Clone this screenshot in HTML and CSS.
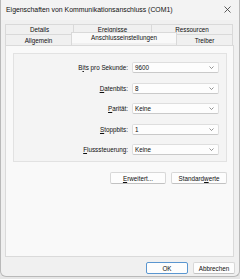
FILE: index.html
```html
<!DOCTYPE html>
<html lang="de">
<head>
    <meta charset="UTF-8">
    <title>Eigenschaften von Kommunikationsanschluss (COM1)</title>
    <link rel="stylesheet" href="styles.css">
</head>
<body>
    <div class="window">
        <div class="titlebar">
            <span class="title">Eigenschaften von Kommunikationsanschluss (COM1)</span>
            <svg class="close" width="7" height="7" viewBox="0 0 7 7">
                <path d="M0.5 0.5 L6.5 6.5 M6.5 0.5 L0.5 6.5" stroke="#333" stroke-width="0.8" fill="none"/>
            </svg>
        </div>

        <div class="tabs">
            <div class="tab-row back">
                <div class="tab tab-details">Details</div>
                <div class="tab tab-events">Ereignisse</div>
                <div class="tab tab-res">Ressourcen</div>
            </div>
            <div class="tab-row front">
                <div class="tab tab-general">Allgemein</div>
                <div class="tab tab-port active">Anschlusseinstellungen</div>
                <div class="tab tab-driver">Treiber</div>
            </div>
        </div>

        <div class="panel">
            <div class="group">
                <div class="field">
                    <span class="label">B<u>i</u>ts pro Sekunde:</span>
                    <div class="combo"><span>9600</span><svg class="chevron" width="5" height="3" viewBox="0 0 5 3"><path d="M0.5 0.5 L2.5 2.5 L4.5 0.5" stroke="#666" stroke-width="0.7" fill="none"/></svg></div>
                </div>
                <div class="field">
                    <span class="label"><u>D</u>atenbits:</span>
                    <div class="combo"><span>8</span><svg class="chevron" width="5" height="3" viewBox="0 0 5 3"><path d="M0.5 0.5 L2.5 2.5 L4.5 0.5" stroke="#666" stroke-width="0.7" fill="none"/></svg></div>
                </div>
                <div class="field">
                    <span class="label"><u>P</u>arität:</span>
                    <div class="combo"><span>Keine</span><svg class="chevron" width="5" height="3" viewBox="0 0 5 3"><path d="M0.5 0.5 L2.5 2.5 L4.5 0.5" stroke="#666" stroke-width="0.7" fill="none"/></svg></div>
                </div>
                <div class="field">
                    <span class="label"><u>S</u>toppbits:</span>
                    <div class="combo"><span>1</span><svg class="chevron" width="5" height="3" viewBox="0 0 5 3"><path d="M0.5 0.5 L2.5 2.5 L4.5 0.5" stroke="#666" stroke-width="0.7" fill="none"/></svg></div>
                </div>
                <div class="field">
                    <span class="label"><u>F</u>lusssteuerung:</span>
                    <div class="combo"><span>Keine</span><svg class="chevron" width="5" height="3" viewBox="0 0 5 3"><path d="M0.5 0.5 L2.5 2.5 L4.5 0.5" stroke="#666" stroke-width="0.7" fill="none"/></svg></div>
                </div>
            </div>

            <div class="group-buttons">
                <button class="btn btn-wide"><u>E</u>rweitert...</button>
                <button class="btn btn-wide">Standard<u>w</u>erte</button>
            </div>
        </div>

        <div class="footer">
            <button class="btn btn-dialog default">OK</button>
            <button class="btn btn-dialog">Abbrechen</button>
        </div>
    </div>
</body>
</html>
```

FILE: styles.css
```css
* {
    margin: 0;
    padding: 0;
    box-sizing: border-box;
}

body {
    width: 240px;
    height: 279px;
    background: #e6e6e6;
    font-family: 'Liberation Sans', Arial, sans-serif;
    font-size: 6.3px;
    color: #0f0f0f;
    overflow: hidden;
}

.window {
    width: 240px;
    height: 277px;
    background: #f0f0f0;
    border: 1px solid #b9b9b9;
    border-top: none;
    border-radius: 0 0 6px 6px;
    overflow: hidden;
}

/* Titelleiste */
.titlebar {
    height: 20px;
    display: flex;
    align-items: center;
    justify-content: space-between;
    padding: 0 8px 1px 5px;
    background: #f3f3f3;
}

.title {
    font-size: 6.9px;
    color: #111;
}

.close {
    display: block;
}

/* Registerkarten */
.tabs {
    margin: 4px 0 0 4px;
    width: 228px;
}

.tab-row {
    display: flex;
}

.tab {
    display: flex;
    align-items: center;
    justify-content: center;
    background: #f0f0f0;
    border: 1px solid #d9d9d9;
    border-bottom: none;
    margin-right: -1px;
}

.tab-row.back .tab {
    height: 10px;
}

.tab-row.front .tab {
    height: 11px;
}

.tab-details { width: 69px; }
.tab-events { width: 79px; }
.tab-res { width: 82px; }

.tab-general { width: 67px; }
.tab-port { width: 106px; }
.tab-driver { width: 57px; }

.tab.active {
    position: relative;
    z-index: 1;
    background: #f9f9f9;
    height: 14px;
    margin-top: -2px;
    margin-bottom: -1px;
    padding-bottom: 2px;
}

/* Hauptbereich */
.panel {
    margin-left: 4px;
    width: 229px;
    height: 212px;
    background: #f9f9f9;
    border: 1px solid #dadada;
}

.group {
    margin: 7px 6px 0 7px;
    height: 109px;
    background: #f4f4f4;
    border: 1px solid #e2e2e2;
    padding: 8px 7px 0 0;
    display: flex;
    flex-direction: column;
    gap: 9.5px;
}

.field {
    display: grid;
    grid-template-columns: 1fr 87px;
    column-gap: 4px;
    align-items: center;
}

.label {
    text-align: right;
}

.combo {
    height: 11px;
    background: #fdfdfd;
    border: 1px solid #dedede;
    border-bottom-color: #c9c9c9;
    border-radius: 2px;
    display: flex;
    align-items: center;
    justify-content: space-between;
    padding: 0 4px 0 2px;
}

.chevron {
    display: block;
}

.group-buttons {
    display: flex;
    justify-content: flex-end;
    gap: 5px;
    margin: 10px 6px 0 0;
}

.btn {
    font-family: inherit;
    font-size: 6.3px;
    color: #0f0f0f;
    height: 12px;
    background: #fdfdfd;
    border: 1px solid #d8d8d8;
    border-bottom-color: #c2c2c2;
    border-radius: 2px;
}

.btn-wide {
    width: 56px;
}

.btn-dialog {
    width: 42px;
}

.btn.default {
    border: 1px solid #5a96d0;
}

.footer {
    display: flex;
    justify-content: flex-end;
    gap: 5px;
    padding: 5px 4px 0 0;
}
```
